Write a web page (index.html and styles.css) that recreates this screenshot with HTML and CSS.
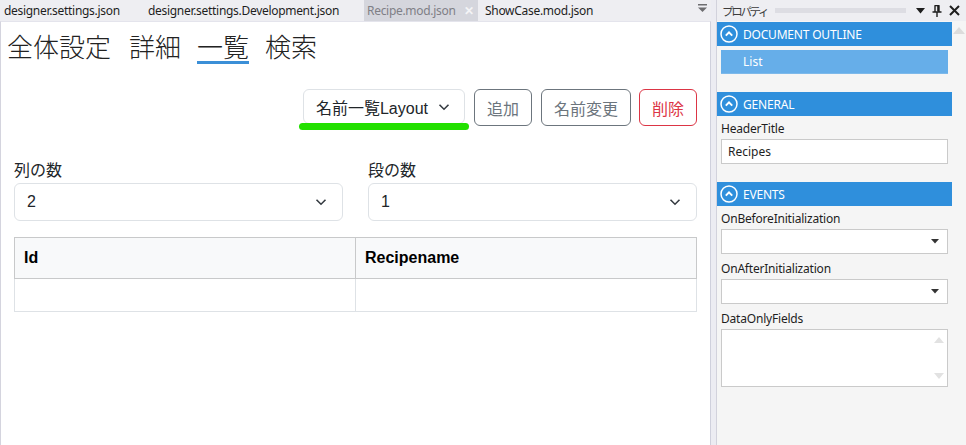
FILE: index.html
```html
<!DOCTYPE html>
<html lang="ja">
<head>
<meta charset="utf-8">
<title>Recipe.mod.json</title>
<link rel="stylesheet" href="styles.css">
</head>
<body>
<div class="ide">
  <div class="editor">
    <div class="tabstrip">
      <span class="tab t1">designer.settings.json</span>
      <span class="tab t2">designer.settings.Development.json</span>
      <span class="tab t3 active">Recipe.mod.json<span class="tab-close">✕</span></span>
      <span class="tab t4">ShowCase.mod.json</span>
      <span class="tab-menu"><svg width="9" height="8" viewBox="0 0 9 8"><rect x="0" y="0" width="9" height="1.5" fill="#6d6d70"/><path d="M0 3.5h9L4.5 8z" fill="#6d6d70"/></svg></span>
    </div>
    <div class="doc">
      <nav class="pagenav">
        <span class="navitem">全体設定</span>
        <span class="navitem">詳細</span>
        <span class="navitem current">一覧</span>
        <span class="navitem">検索</span>
      </nav>
      <div class="toolbar">
        <div class="layout-select">
          <span>名前一覧Layout</span>
          <svg class="chev" width="12" height="8" viewBox="0 0 12 8"><path d="M1.5 1.8 6 6.2l4.5-4.4" fill="none" stroke="#343a40" stroke-width="1.6"/></svg>
          <span class="highlight"></span>
        </div>
        <button class="btn btn-secondary">追加</button>
        <button class="btn btn-secondary">名前変更</button>
        <button class="btn btn-danger">削除</button>
      </div>
      <div class="formrow">
        <div class="field">
          <label class="flabel">列の数</label>
          <div class="fselect"><span>2</span><svg class="chev" width="12" height="8" viewBox="0 0 12 8"><path d="M1.5 1.8 6 6.2l4.5-4.4" fill="none" stroke="#343a40" stroke-width="1.6"/></svg></div>
        </div>
        <div class="field">
          <label class="flabel">段の数</label>
          <div class="fselect"><span>1</span><svg class="chev" width="12" height="8" viewBox="0 0 12 8"><path d="M1.5 1.8 6 6.2l4.5-4.4" fill="none" stroke="#343a40" stroke-width="1.6"/></svg></div>
        </div>
      </div>
      <table class="grid">
        <thead><tr><th>Id</th><th>Recipename</th></tr></thead>
        <tbody><tr><td></td><td></td></tr></tbody>
      </table>
    </div>
  </div>
  <div class="splitter"></div>
  <div class="props">
    <div class="props-title">
      <span class="props-name">プロパティ</span>
      <span class="grip"></span>
      <svg class="ticon" width="9" height="6" viewBox="0 0 9 6"><path d="M0 0h9L4.5 5.5z" fill="#1e1e1e"/></svg>
      <svg class="ticon" width="10" height="12" viewBox="0 0 10 12"><path d="M2.5 0.5h5M3 0.5v6M7 0.5v6M0.5 7h9M5 7v5" fill="none" stroke="#1e1e1e" stroke-width="1.4"/><rect x="5.2" y="0.5" width="1.8" height="6" fill="#1e1e1e"/></svg>
      <svg class="ticon" width="11" height="11" viewBox="0 0 11 11"><path d="M1 1l9 9M10 1l-9 9" stroke="#1e1e1e" stroke-width="2"/></svg>
    </div>
    <div class="props-body">
      <div class="props-content">
        <div class="section">
          <svg class="sec-icon" width="18" height="18" viewBox="0 0 18 18"><circle cx="9" cy="9" r="8" fill="none" stroke="#fff" stroke-width="1.5"/><path d="M5.8 10.6 9 7.4l3.2 3.2" fill="none" stroke="#fff" stroke-width="2"/></svg>
          <span>DOCUMENT OUTLINE</span>
        </div>
        <div class="outline-item">List</div>
        <div class="section sec-gap">
          <svg class="sec-icon" width="18" height="18" viewBox="0 0 18 18"><circle cx="9" cy="9" r="8" fill="none" stroke="#fff" stroke-width="1.5"/><path d="M5.8 10.6 9 7.4l3.2 3.2" fill="none" stroke="#fff" stroke-width="2"/></svg>
          <span>GENERAL</span>
        </div>
        <div class="prop">
          <div class="plabel">HeaderTitle</div>
          <div class="pbox">Recipes</div>
        </div>
        <div class="section sec-gap">
          <svg class="sec-icon" width="18" height="18" viewBox="0 0 18 18"><circle cx="9" cy="9" r="8" fill="none" stroke="#fff" stroke-width="1.5"/><path d="M5.8 10.6 9 7.4l3.2 3.2" fill="none" stroke="#fff" stroke-width="2"/></svg>
          <span>EVENTS</span>
        </div>
        <div class="prop">
          <div class="plabel">OnBeforeInitialization</div>
          <div class="pbox combo"><svg width="8" height="5" viewBox="0 0 8 5"><path d="M0 0h8L4 4.5z" fill="#333"/></svg></div>
        </div>
        <div class="prop">
          <div class="plabel">OnAfterInitialization</div>
          <div class="pbox combo"><svg width="8" height="5" viewBox="0 0 8 5"><path d="M0 0h8L4 4.5z" fill="#333"/></svg></div>
        </div>
        <div class="prop">
          <div class="plabel">DataOnlyFields</div>
          <div class="pbox area">
            <svg width="10" height="6" viewBox="0 0 10 6"><path d="M0 6h10L5 0z" fill="#e2e2e2"/></svg>
            <svg width="10" height="6" viewBox="0 0 10 6"><path d="M0 0h10L5 6z" fill="#e2e2e2"/></svg>
          </div>
        </div>
      </div>
      <div class="vscroll">
        <svg width="12" height="7" viewBox="0 0 12 7"><path d="M0 7h12L6 0z" fill="#dcdcdc"/></svg>
      </div>
    </div>
  </div>
</div>
</body>
</html>
```

FILE: styles.css
```css
* { box-sizing: border-box; }
html, body { margin: 0; padding: 0; }
body {
  width: 966px;
  height: 445px;
  overflow: hidden;
  background: #eeeef2;
  font-family: "Noto Sans", "Noto Sans CJK JP", sans-serif;
}
.ide {
  display: flex;
  height: 445px;
}
.editor {
  width: 711px;
  display: flex;
  flex-direction: column;
}
.tabstrip {
  height: 21px;
  display: flex;
  align-items: stretch;
  font-size: 12px;
  color: #1e1e1e;
  position: relative;
}
.tab {
  display: flex;
  align-items: center;
  white-space: nowrap;
  padding-bottom: 1px;
  letter-spacing: -0.3px;
}
.t1 { padding-left: 4px; width: 148px; }
.t2 { width: 216px; }
.t4 { padding-left: 0; }
.tab.active {
  background: #d5d6dd;
  color: #7f7f86;
  width: 114px;
  padding-left: 3px;
  margin-right: 7px;
}
.tab-close {
  color: #f4f4f6;
  font-size: 12px;
  margin-left: 8px;
  font-weight: bold;
}
.tab-menu {
  margin-left: auto;
  margin-right: 4px;
  display: flex;
  align-items: center;
  padding-bottom: 6px;
}
.doc {
  flex: 1;
  background: #fff;
  border-left: 1px solid #d4d4de;
  border-right: 1px solid #cfd0dc;
  border-top: 1px solid #e4e4ec;
  padding: 0 13px;
  font-family: "Liberation Sans", "Noto Sans CJK JP", sans-serif;
  color: #212529;
}
.pagenav {
  display: flex;
  gap: 16px;
  margin-left: -7px;
  padding-top: 8px;
  font-family: "Noto Sans CJK JP", sans-serif;
  font-size: 26px;
  font-weight: 300;
  color: #222;
}
.navitem {
  line-height: 31px;
  border-bottom: 3px solid transparent;
}
.navitem:first-child { margin-right: 2px; }
.navitem.current { border-bottom-color: #3b8fd7; }
.toolbar {
  display: flex;
  justify-content: flex-end;
  align-items: flex-start;
  gap: 8px;
  margin-top: 25px;
}
.layout-select {
  position: relative;
  width: 162px;
  height: 35px;
  margin-right: 1px;
  border: 1px solid #dee2e6;
  border-radius: 6px;
  display: flex;
  align-items: center;
  justify-content: space-between;
  padding: 0 14px 0 12px;
  font-size: 16px;
  color: #212529;
}
.highlight {
  position: absolute;
  left: -5px;
  right: -5px;
  top: 33px;
  height: 7px;
  border-radius: 4px;
  background: #22e000;
}
.btn {
  height: 37px;
  padding: 0 12px;
  font-family: "Liberation Sans", "Noto Sans CJK JP", sans-serif;
  font-size: 16px;
  background: #fff;
  border-radius: 6px;
  border: 1px solid;
}
.btn-secondary { color: #6c757d; border-color: #6c757d; }
.btn-secondary:first-of-type { margin-right: 1px; }
.btn-danger { color: #dc3545; border-color: #dc3545; }
.formrow {
  display: grid;
  grid-template-columns: 1fr 1fr;
  column-gap: 25px;
  margin-top: 33px;
}
.flabel {
  display: block;
  font-size: 16px;
  line-height: 24px;
  color: #212529;
}
.fselect {
  height: 38px;
  border: 1px solid #dee2e6;
  border-radius: 6px;
  display: flex;
  align-items: center;
  justify-content: space-between;
  padding: 0 15px 0 12px;
  font-size: 16px;
}
.grid {
  width: 100%;
  margin-top: 16px;
  border-collapse: collapse;
  table-layout: fixed;
  font-size: 16px;
}
.grid th {
  height: 41px;
  text-align: left;
  padding: 0 9px;
  background: #f8f9fa;
  border: 1px solid #c8c9ca;
  font-weight: bold;
  color: #000;
}
.grid td {
  height: 33px;
  border: 1px solid #dee2e6;
  border-top: none;
}
.splitter {
  width: 6px;
  border-right: 1px solid #d2d2dc;
  background: #ececf2;
}
.props {
  flex: 1;
  background: #f5f5f5;
  display: flex;
  flex-direction: column;
  font-family: "Noto Sans", sans-serif;
}
.props-title {
  height: 21px;
  display: flex;
  align-items: center;
  padding: 0 6px 0 5px;
  background: #eeeef2;
  font-size: 12px;
  color: #3c3c3c;
}
.props-name {
  font-family: "Noto Sans CJK JP", sans-serif;
  font-size: 11.5px;
  letter-spacing: -2.3px;
}
.grip {
  flex: 1;
  height: 5px;
  margin: 0 10px 0 8px;
  background-image: radial-gradient(circle, #c2c2ca 0.55px, transparent 0.8px);
  background-size: 2px 2px;
}
.ticon { margin-left: 7px; }
.ticon:first-of-type { margin-left: 0; }
.props-body {
  flex: 1;
  display: flex;
}
.props-content {
  width: 235px;
  padding-top: 1px;
}
.vscroll {
  flex: 1;
  display: flex;
  justify-content: center;
  padding-top: 6px;
}
.section {
  height: 24px;
  background: #2f8fdc;
  color: #fff;
  display: flex;
  align-items: center;
  padding-left: 3px;
  font-size: 12px;
  letter-spacing: -0.2px;
}
.section span { margin-left: 5px; }
.sec-gap { margin-top: 18px; }
.outline-item {
  margin: 4px 4px 0 4px;
  height: 24px;
  background: #66aee9;
  border-bottom: 1px solid #7db9ea;
  color: #fff;
  font-size: 12px;
  display: flex;
  align-items: center;
  padding-left: 22px;
}
.prop {
  padding: 0 4px;
  margin-bottom: 2px;
}
.plabel {
  font-size: 12px;
  line-height: 16px;
  padding-top: 5px;
  margin-bottom: 2px;
  color: #1e1e1e;
  letter-spacing: -0.2px;
}
.pbox {
  height: 25px;
  background: #fff;
  border: 1px solid #cacaca;
  font-size: 12px;
  display: flex;
  align-items: center;
  padding-left: 6px;
  color: #1e1e1e;
}
.combo {
  justify-content: flex-end;
  padding-right: 8px;
}
.area {
  height: 58px;
  flex-direction: column;
  align-items: flex-end;
  justify-content: space-between;
  padding: 7px 3px 7px 0;
}
```
